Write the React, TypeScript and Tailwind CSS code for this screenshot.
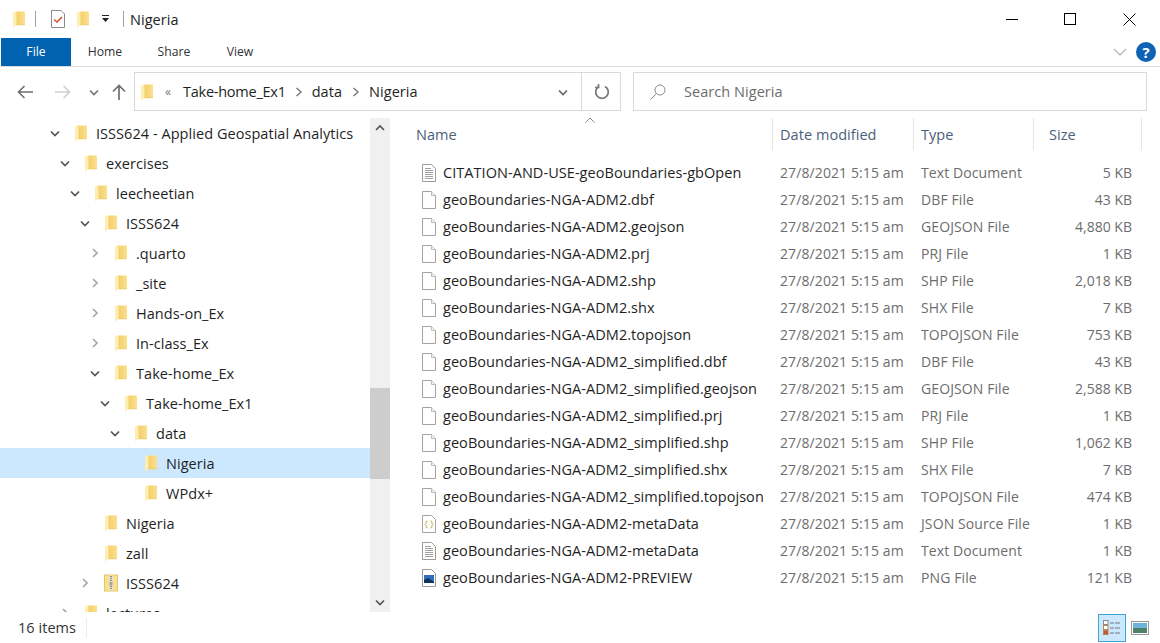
import type { ReactNode } from "react";

function Chevron({ dir = "down", className = "" }: { dir?: "down" | "right" | "up"; className?: string }) {
  const d = dir === "down" ? "M2 4.5 L6 8.5 L10 4.5" : dir === "up" ? "M2 8 L6 4 L10 8" : "M4 2 L8 6 L4 10";
  return (
    <svg viewBox="0 0 12 12" className={`h-3 w-3 ${className}`} fill="none" stroke="currentColor" strokeWidth="1.7">
      <path d={d} />
    </svg>
  );
}

function Folder({ className = "" }: { className?: string }) {
  return (
    <svg viewBox="0 0 14 18" className={`h-[18px] w-[14px] shrink-0 ${className}`}>
      <defs>
        <linearGradient id="folderBody" x1="0" y1="0" x2="1" y2="0">
          <stop offset="0" stopColor="#f5cd68" />
          <stop offset="1" stopColor="#fbe08f" />
        </linearGradient>
      </defs>
      <path d="M4 1.5 H13 V15 H4 Z" fill="url(#folderBody)" />
      <path d="M1 2.5 L4.5 1 V15 L1 17.5 Z" fill="#fdeeb4" />
      <path d="M4.5 14.6 H13 V15.2 H4.5 Z" fill="#ecc45f" />
    </svg>
  );
}

function ZipFolder() {
  return (
    <svg viewBox="0 0 14 18" className="h-[18px] w-[14px] shrink-0">
      <rect x="0.5" y="1" width="13" height="16" fill="#fbe08f" stroke="#e6c468" />
      <rect x="5" y="1.5" width="4" height="15" fill="#e6e2cf" />
      <path d="M6 2.5h2M6 4.5h2M6 6.5h2M6 12.5h2M6 14.5h2" stroke="#85857c" />
      <rect x="5.5" y="8" width="3" height="3.5" fill="#a3a39a" />
    </svg>
  );
}

function PlainFile() {
  return (
    <svg viewBox="0 0 16 18" className="h-[18px] w-4">
      <path d="M1.5 0.5 H10.5 L14.5 4.5 V17.5 H1.5 Z" fill="#fff" stroke="#a3a3a3" />
      <path d="M10.5 0.5 V4.5 H14.5" fill="#f2f2f2" stroke="#bcbcbc" />
    </svg>
  );
}

function TextFile() {
  return (
    <svg viewBox="0 0 16 18" className="h-[18px] w-4">
      <path d="M1.5 0.5 H10.5 L14.5 4.5 V17.5 H1.5 Z" fill="#fff" stroke="#9c9c9c" />
      <path d="M4 4.5h6M4 6.5h8M4 8.5h8M4 10.5h8M4 12.5h8M4 14.5h8" stroke="#a0a0a0" />
    </svg>
  );
}

function JsonFile() {
  return (
    <svg viewBox="0 0 16 18" className="h-[18px] w-4">
      <path d="M1.5 0.5 H10.5 L14.5 4.5 V17.5 H1.5 Z" fill="#fff" stroke="#a3a3a3" />
      <path d="M6.5 6 Q5 6 5 7.5 V8.5 L4 9.5 L5 10.5 V11.5 Q5 13 6.5 13 M9.5 6 Q11 6 11 7.5 V8.5 L12 9.5 L11 10.5 V11.5 Q11 13 9.5 13" fill="none" stroke="#a8a83a" />
    </svg>
  );
}

function PngFile() {
  return (
    <svg viewBox="0 0 16 18" className="h-[18px] w-4">
      <path d="M1.5 0.5 H10.5 L14.5 4.5 V17.5 H1.5 Z" fill="#fff" stroke="#9c9c9c" />
      <rect x="3" y="6" width="10" height="8" fill="#2f6fb8" />
      <path d="M3 14 L3 11 L7 9 L13 13 V14 Z" fill="#12325e" />
    </svg>
  );
}

const tree: { label: string; level: number; chevron?: "down" | "right"; selected?: boolean; zip?: boolean }[] = [
  { label: "ISSS624 - Applied Geospatial Analytics", level: 0, chevron: "down" },
  { label: "exercises", level: 1, chevron: "down" },
  { label: "leecheetian", level: 2, chevron: "down" },
  { label: "ISSS624", level: 3, chevron: "down" },
  { label: ".quarto", level: 4, chevron: "right" },
  { label: "_site", level: 4, chevron: "right" },
  { label: "Hands-on_Ex", level: 4, chevron: "right" },
  { label: "In-class_Ex", level: 4, chevron: "right" },
  { label: "Take-home_Ex", level: 4, chevron: "down" },
  { label: "Take-home_Ex1", level: 5, chevron: "down" },
  { label: "data", level: 6, chevron: "down" },
  { label: "Nigeria", level: 7, selected: true },
  { label: "WPdx+", level: 7 },
  { label: "Nigeria", level: 3 },
  { label: "zall", level: 3 },
  { label: "ISSS624", level: 3, chevron: "right", zip: true },
  { label: "lectures", level: 1, chevron: "right" },
];

const plain = <PlainFile />;
const text = <TextFile />;

const files: { icon: ReactNode; name: string; type: string; size: string }[] = [
  { icon: text, name: "CITATION-AND-USE-geoBoundaries-gbOpen", type: "Text Document", size: "5 KB" },
  { icon: plain, name: "geoBoundaries-NGA-ADM2.dbf", type: "DBF File", size: "43 KB" },
  { icon: plain, name: "geoBoundaries-NGA-ADM2.geojson", type: "GEOJSON File", size: "4,880 KB" },
  { icon: plain, name: "geoBoundaries-NGA-ADM2.prj", type: "PRJ File", size: "1 KB" },
  { icon: plain, name: "geoBoundaries-NGA-ADM2.shp", type: "SHP File", size: "2,018 KB" },
  { icon: plain, name: "geoBoundaries-NGA-ADM2.shx", type: "SHX File", size: "7 KB" },
  { icon: plain, name: "geoBoundaries-NGA-ADM2.topojson", type: "TOPOJSON File", size: "753 KB" },
  { icon: plain, name: "geoBoundaries-NGA-ADM2_simplified.dbf", type: "DBF File", size: "43 KB" },
  { icon: plain, name: "geoBoundaries-NGA-ADM2_simplified.geojson", type: "GEOJSON File", size: "2,588 KB" },
  { icon: plain, name: "geoBoundaries-NGA-ADM2_simplified.prj", type: "PRJ File", size: "1 KB" },
  { icon: plain, name: "geoBoundaries-NGA-ADM2_simplified.shp", type: "SHP File", size: "1,062 KB" },
  { icon: plain, name: "geoBoundaries-NGA-ADM2_simplified.shx", type: "SHX File", size: "7 KB" },
  { icon: plain, name: "geoBoundaries-NGA-ADM2_simplified.topojson", type: "TOPOJSON File", size: "474 KB" },
  { icon: <JsonFile />, name: "geoBoundaries-NGA-ADM2-metaData", type: "JSON Source File", size: "1 KB" },
  { icon: text, name: "geoBoundaries-NGA-ADM2-metaData", type: "Text Document", size: "1 KB" },
  { icon: <PngFile />, name: "geoBoundaries-NGA-ADM2-PREVIEW", type: "PNG File", size: "121 KB" },
];

function HeaderCell({ label, className }: { label: string; className: string }) {
  return (
    <div className={`flex h-[32px] shrink-0 items-center border-r border-[#e5e5e5] pt-px ${className}`}>
      <span>{label}</span>
    </div>
  );
}

export default function App() {
  return (
    <div className="flex h-[643px] w-[1160px] flex-col overflow-hidden bg-white text-[14.5px] tracking-[0.05px] text-[#1f1f1f] [font-family:'Open_Sans',sans-serif]">
      {/* Title bar */}
      <div className="flex h-[38px] shrink-0 items-center">
        <Folder className="ml-[12px]" />
        <div className="ml-[9px] h-[16px] w-px bg-[#a0a0a0]" />
        <svg viewBox="0 0 16 18" className="ml-[14px] h-[18px] w-4">
          <path d="M1.5 0.5 H11 L14.5 4 V17.5 H1.5 Z" fill="#fff" stroke="#8a8a8a" />
          <path d="M4 9.5 L7 12 L12 7" fill="none" stroke="#d9532c" strokeWidth="1.6" />
        </svg>
        <Folder className="ml-[10px]" />
        <svg viewBox="0 0 8 8" className="ml-[12px] h-2 w-2">
          <path d="M0 0h7v1H0z M0 3h7L3.5 7z" fill="#222" />
        </svg>
        <div className="ml-[13px] h-[16px] w-px bg-[#a0a0a0]" />
        <span className="ml-[6px] pt-px text-[#222]">Nigeria</span>
        <div className="ml-auto flex items-center">
          <div className="flex h-[38px] w-[60px] items-center justify-center">
            <div className="h-px w-[12px] bg-black" />
          </div>
          <div className="flex h-[38px] w-[60px] items-center justify-center pr-[4px]">
            <div className="h-[12px] w-[12px] border border-black" />
          </div>
          <div className="flex h-[38px] w-[58px] items-center justify-center pr-[4px]">
            <svg viewBox="0 0 13 13" className="h-[13px] w-[13px]" stroke="#000" strokeWidth="1">
              <path d="M0.5 0.5 L12.5 12.5 M12.5 0.5 L0.5 12.5" />
            </svg>
          </div>
        </div>
      </div>

      {/* Ribbon tabs */}
      <div className="flex h-[29px] shrink-0 items-stretch border-b border-[#dadbdc] pl-px text-[12.2px] tracking-normal text-[#333]">
        <div className="flex w-[70px] items-center justify-center bg-[#0063b1] text-white">File</div>
        <div className="flex w-[68px] items-center justify-center pt-px">Home</div>
        <div className="flex w-[70px] items-center justify-center pt-px">Share</div>
        <div className="flex w-[62px] items-center justify-center pt-px">View</div>
        <div className="ml-auto flex items-center gap-[9px] pr-[4px]">
          <svg viewBox="0 0 14 8" className="h-2 w-[14px]" fill="none" stroke="#b4b4b4" strokeWidth="1.2">
            <path d="M1 1 L7 7 L13 1" />
          </svg>
          <div className="flex h-5 w-5 items-center justify-center rounded-full bg-[#0f63b5] text-[15px] font-bold text-white">?</div>
        </div>
      </div>

      {/* Navigation bar */}
      <div className="flex h-[51px] shrink-0 items-center pb-[2px]">
        <svg viewBox="0 0 16 14" className="ml-[17px] h-[14px] w-4" fill="none" stroke="#6e6e6e" strokeWidth="1.6">
          <path d="M16 7 H1.5 M7.5 1 L1.5 7 L7.5 13" />
        </svg>
        <svg viewBox="0 0 16 14" className="ml-[22px] h-[14px] w-4" fill="none" stroke="#d0d0d0" strokeWidth="1.6">
          <path d="M0 7 H14.5 M8.5 1 L14.5 7 L8.5 13" />
        </svg>
        <Chevron className="ml-[17px] text-[#777]" />
        <svg viewBox="0 0 14 16" className="ml-[12px] h-4 w-[14px]" fill="none" stroke="#6e6e6e" strokeWidth="1.7">
          <path d="M7 16 V1.5 M1 7.5 L7 1.5 L13 7.5" />
        </svg>
        <div className="ml-[8px] flex h-[39px] w-[487px] items-center border border-[#d9d9d9]">
          <Folder className="ml-[5px]" />
          <span className="ml-[11px] text-[12px] text-[#777]">«</span>
          <span className="ml-[12px] tracking-[-0.25px]">Take-home_Ex1</span>
          <svg viewBox="0 0 8 10" className="ml-[9px] h-[10px] w-2" fill="none" stroke="#777" strokeWidth="1.4">
            <path d="M1.5 1 L6 5 L1.5 9" />
          </svg>
          <span className="ml-[9px]">data</span>
          <svg viewBox="0 0 8 10" className="ml-[10px] h-[10px] w-2" fill="none" stroke="#777" strokeWidth="1.4">
            <path d="M1.5 1 L6 5 L1.5 9" />
          </svg>
          <span className="ml-[9px]">Nigeria</span>
          <Chevron className="ml-auto mr-[12px] text-[#666]" />
          <div className="flex h-full w-[39px] items-center justify-center border-l border-[#d9d9d9] pl-px">
            <svg viewBox="0 0 16 16" className="h-4 w-4" fill="none" stroke="#777" strokeWidth="1.7">
              <path d="M5 2.5 A6.3 6.3 0 1 0 11 2.5" />
              <path d="M4.5 0 V3.5 H1" />
            </svg>
          </div>
        </div>
        <div className="ml-[12px] flex h-[39px] w-[514px] items-center border border-[#d9d9d9] text-[#6d6d6d]">
          <svg viewBox="0 0 16 16" className="ml-[16px] h-4 w-4" fill="none" stroke="#8a8a8a" strokeWidth="1">
            <circle cx="10" cy="6" r="5" />
            <path d="M6.5 9.5 L0.5 15.5" />
          </svg>
          <span className="ml-[18px]">Search Nigeria</span>
        </div>
      </div>

      {/* Main area */}
      <div className="flex h-[494px] shrink-0">
        <div className="h-full w-[370px] shrink-0 overflow-hidden">
          {tree.map((row, i) => (
            <div
              key={i}
              className={`flex h-[30px] items-center ${row.selected ? "bg-[#cce8ff]" : ""}`}
              style={{ paddingLeft: 45 + row.level * 10 }}
            >
              <span className={`flex w-[20px] justify-center ${row.chevron === "right" ? "text-[#a6a6a6]" : "text-[#555]"}`}>
                {row.chevron && <Chevron dir={row.chevron} />}
              </span>
              <span className="ml-[9px] mr-[8px] flex">{row.zip ? <ZipFolder /> : <Folder />}</span>
              <span className="whitespace-nowrap pt-px">{row.label}</span>
            </div>
          ))}
        </div>

        <div className="flex h-full w-[20px] shrink-0 flex-col bg-[#f0f0f0]">
          <div className="flex h-[20px] items-center justify-center text-[#555]">
            <Chevron dir="up" />
          </div>
          <div className="mt-[250px] h-[91px] bg-[#cdcdcd]" />
          <div className="mt-auto flex h-[20px] items-center justify-center text-[#555]">
            <Chevron />
          </div>
        </div>

        <div className="relative ml-[26px] min-w-0 flex-1">
          <svg viewBox="0 0 10 6" className="absolute left-[169px] top-[-1px] h-[6px] w-[10px]" fill="none" stroke="#8a8a8a">
            <path d="M0.5 5.5 L5 1 L9.5 5.5" />
          </svg>
          <div className="flex text-[#4c607a]">
            <HeaderCell label="Name" className="w-[357px]" />
            <HeaderCell label="Date modified" className="w-[141px] pl-[7px]" />
            <HeaderCell label="Type" className="w-[120px] pl-[7px]" />
            <HeaderCell label="Size" className="w-[108px] pl-[15px]" />
          </div>
          <div className="mt-[9px]">
            {files.map((f, i) => (
              <div key={i} className="flex h-[27px] items-center whitespace-nowrap">
                <span className="ml-[5px] flex w-[22px]">{f.icon}</span>
                <span className="w-[337px]">{f.name}</span>
                <span className="w-[141px] text-[14px] tracking-[0.1px] text-[#6d6d6d]">27/8/2021 5:15 am</span>
                <span className="w-[120px] text-[14px] tracking-[0.1px] text-[#6d6d6d]">{f.type}</span>
                <span className="w-[91px] text-right text-[14px] tracking-normal text-[#6d6d6d]">{f.size}</span>
              </div>
            ))}
          </div>
        </div>
      </div>

      {/* Status bar */}
      <div className="flex flex-1 items-center text-[#333]">
        <span className="pl-[18px]">16 items</span>
        <div className="ml-[10px] h-[20px] w-px bg-[#ececec]" />
        <div className="ml-auto flex items-center pr-[11px]">
          <div className="flex h-[28px] w-[28px] items-center justify-center border border-[#3ea6cf] bg-[#cce8ff]">
            <svg viewBox="0 0 18 16" className="h-4 w-[18px]">
              <rect x="0.5" y="0.5" width="4.5" height="4" fill="#fff" stroke="#8a8a8a" />
              <rect x="0.5" y="5.5" width="4.5" height="4" fill="#fff" stroke="#b08a50" />
              <rect x="0.5" y="10.5" width="4.5" height="4" fill="#c4563a" stroke="#b08a50" />
              <path d="M7 3h4M12 3h5M7 8h4M12 8h5M7 13h4M12 13h5" stroke="#777" />
            </svg>
          </div>
          <svg viewBox="0 0 18 14" className="ml-[5px] h-[14px] w-[18px]">
            <rect x="0.5" y="0.5" width="17" height="13" fill="#fff" stroke="#999" />
            <rect x="2" y="2" width="14" height="5" fill="#6db4dc" />
            <rect x="2" y="7" width="14" height="5" fill="#4f7f6a" />
          </svg>
        </div>
      </div>
    </div>
  );
}
